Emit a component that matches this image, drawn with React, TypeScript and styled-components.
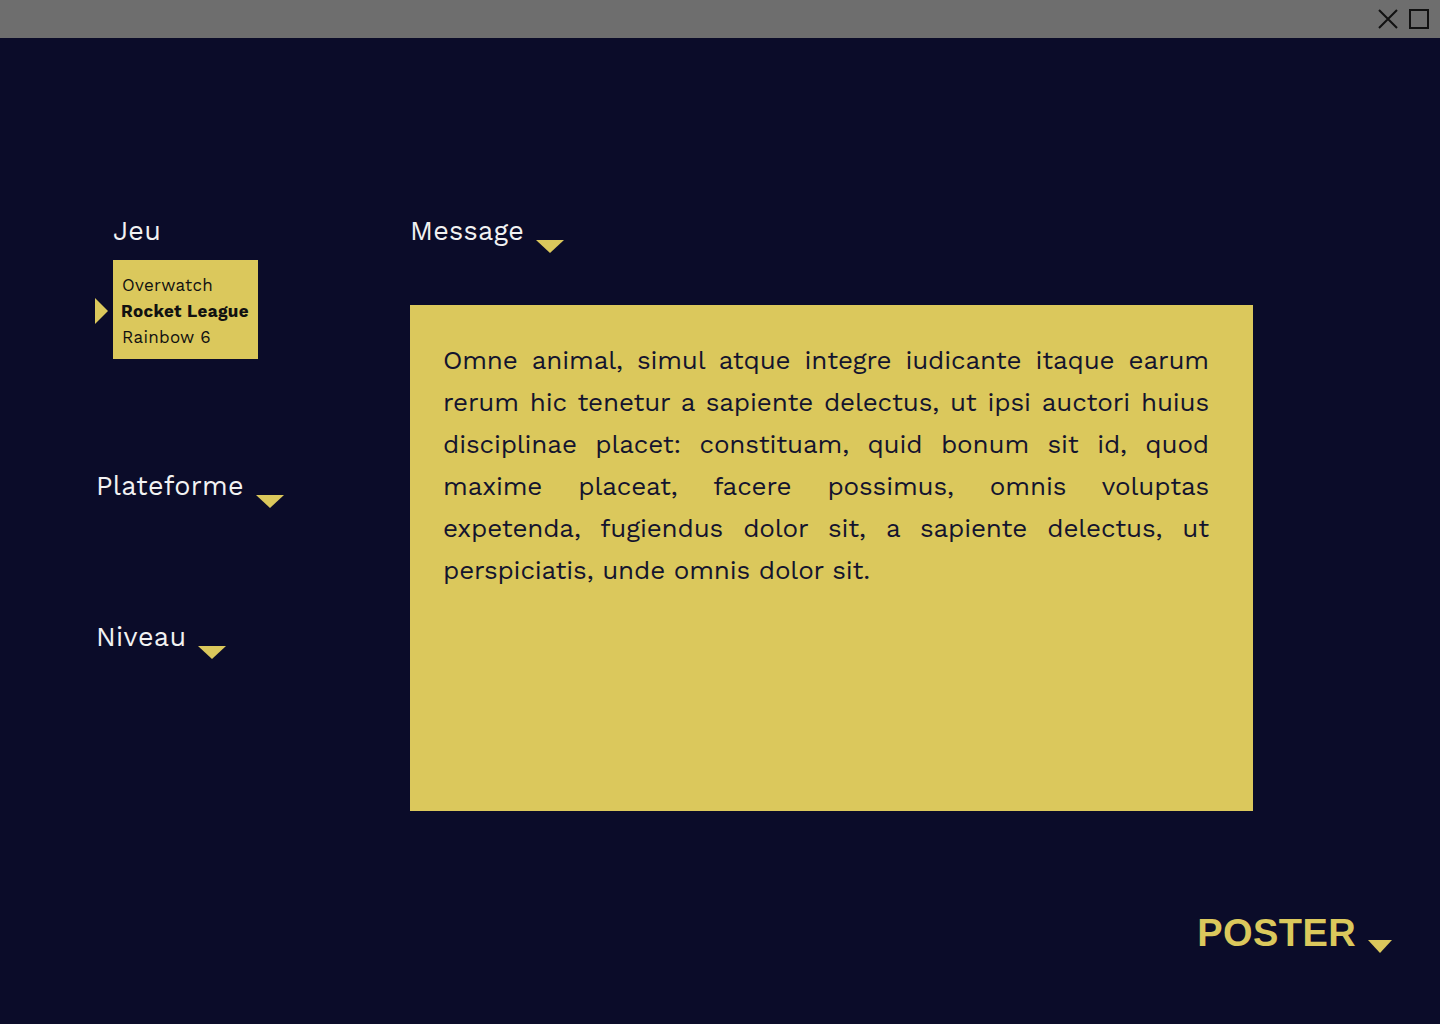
import React from "react";
import styled, { createGlobalStyle } from "styled-components";

const Global = createGlobalStyle`
  html, body { margin: 0; padding: 0; background: #0b0c29; }
  body { font-family: "Work Sans", "Open Sans", "Liberation Sans", sans-serif; }
  * { box-sizing: border-box; }
`;

const YELLOW = "#dbc85c";
const NAVY = "#0b0c29";

const Window = styled.div`
  width: 1440px;
  height: 1024px;
  background: ${NAVY};
  display: flex;
  flex-direction: column;
  overflow: hidden;
`;

const TitleBar = styled.div`
  height: 38px;
  background: #6e6e6e;
  display: flex;
  justify-content: flex-end;
  align-items: center;
  gap: 9px;
  padding-right: 10px;
  flex-shrink: 0;
`;

const IconBtn = styled.svg`
  width: 22px;
  height: 22px;
  display: block;
`;

const Body = styled.div`
  flex: 1;
  display: grid;
  grid-template-columns: 314px 843px 1fr;
  padding: 176px 0 0 96px;
`;

const Side = styled.div`
  display: flex;
  flex-direction: column;
`;

const Label = styled.div<{ $indent?: number }>`
  display: flex;
  align-items: flex-start;
  gap: 12px;
  padding-left: ${(p) => p.$indent ?? 0}px;
  color: #f2f2f2;
  font-size: 27px;
  line-height: 34px;
  letter-spacing: 0.3px;
`;

const DownTri = styled.span<{ $w?: number; $h?: number; $top?: number }>`
  display: block;
  width: 0;
  height: 0;
  margin-top: ${(p) => p.$top ?? 26}px;
  border-left: ${(p) => (p.$w ?? 29) / 2}px solid transparent;
  border-right: ${(p) => (p.$w ?? 29) / 2}px solid transparent;
  border-top: ${(p) => p.$h ?? 13}px solid ${YELLOW};
`;

const GameRow = styled.div`
  display: flex;
  align-items: center;
  gap: 5px;
  margin-top: 12px;
  margin-left: -1px;
`;

const RightTri = styled.span`
  display: block;
  width: 0;
  height: 0;
  margin-top: 2px;
  border-top: 13px solid transparent;
  border-bottom: 13px solid transparent;
  border-left: 13px solid ${YELLOW};
`;

const List = styled.ul`
  list-style: none;
  margin: 0;
  padding: 12px 9px 9px 8px;
  width: 145px;
  background: ${YELLOW};
  color: #111;
`;

const Item = styled.li<{ $active?: boolean }>`
  font-size: 17px;
  line-height: 26px;
  font-weight: ${(p) => (p.$active ? 700 : 400)};
  padding-left: ${(p) => (p.$active ? 0 : 1)}px;
  white-space: nowrap;
  letter-spacing: ${(p) => (p.$active ? "0.35px" : "0.25px")};
`;

const Spacer = styled.div<{ $h: number }>`
  height: ${(p) => p.$h}px;
`;

const Main = styled.div`
  display: flex;
  flex-direction: column;
`;

const MessageBox = styled.div`
  margin-top: 52px;
  height: 506px;
  background: ${YELLOW};
  padding: 34px 44px 0 33px;
  color: #14142e;
  font-size: 26px;
  line-height: 42px;
`;

const Line = styled.div<{ $last?: boolean }>`
  text-align: ${(p) => (p.$last ? "left" : "justify")};
  text-align-last: ${(p) => (p.$last ? "left" : "justify")};
  white-space: nowrap;
  letter-spacing: -0.15px;
`;

const Footer = styled.div`
  grid-column: 1 / span 3;
  display: flex;
  justify-content: flex-end;
  align-items: flex-start;
  gap: 12px;
  padding: 31px 48px 0 0;
`;

const Poster = styled.button`
  background: none;
  border: none;
  padding: 0;
  color: ${YELLOW};
  font-family: "Liberation Sans", Arial, sans-serif;
  font-weight: 700;
  font-size: 38px;
  line-height: 44px;
  letter-spacing: 0.4px;
  cursor: pointer;
`;

const lines = [
  "Omne animal, simul atque integre iudicante itaque earum",
  "rerum hic tenetur a sapiente delectus, ut ipsi auctori huius",
  "disciplinae placet: constituam, quid bonum sit id, quod",
  "maxime placeat, facere possimus, omnis voluptas",
  "expetenda, fugiendus dolor sit, a sapiente delectus, ut",
  "perspiciatis, unde omnis dolor sit.",
];

export default function App() {
  return (
    <>
      <Global />
      <Window>
        <TitleBar>
          <IconBtn viewBox="0 0 22 22">
            <path d="M2 2 L20 20 M20 2 L2 20" stroke="#111" strokeWidth="2" fill="none" />
          </IconBtn>
          <IconBtn viewBox="0 0 22 22">
            <rect x="2" y="2" width="18" height="18" stroke="#111" strokeWidth="2" fill="none" />
          </IconBtn>
        </TitleBar>
        <Body>
          <Side>
            <Label $indent={17}>Jeu</Label>
            <GameRow>
              <RightTri />
              <List>
                <Item>Overwatch</Item>
                <Item $active>Rocket League</Item>
                <Item>Rainbow 6</Item>
              </List>
            </GameRow>
            <Spacer $h={110} />
            <Label>
              Plateforme
              <DownTri />
            </Label>
            <Spacer $h={112} />
            <Label>
              Niveau
              <DownTri />
            </Label>
          </Side>
          <Main>
            <Label>
              Message
              <DownTri />
            </Label>
            <MessageBox>
              {lines.map((l, i) => (
                <Line key={i} $last={i === lines.length - 1}>
                  {l}
                </Line>
              ))}
            </MessageBox>
          </Main>
          <div />
          <Footer>
            <Poster>POSTER</Poster>
            <DownTri $w={25} $h={13} $top={29} />
          </Footer>
        </Body>
      </Window>
    </>
  );
}
